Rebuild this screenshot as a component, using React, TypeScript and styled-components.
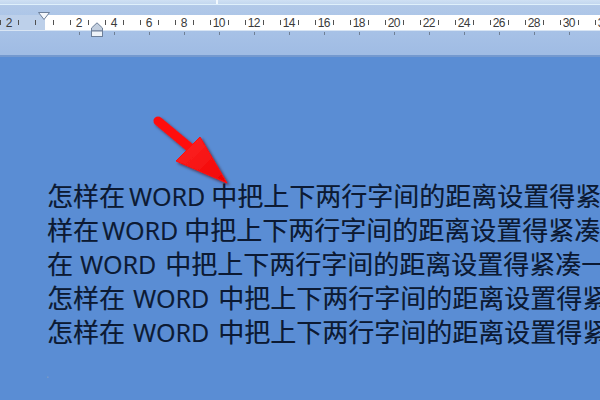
import styled, { createGlobalStyle } from "styled-components";

const GlobalStyle = createGlobalStyle`
  html, body {
    margin: 0;
    padding: 0;
  }
  body {
    width: 600px;
    height: 400px;
    overflow: hidden;
    font-family: "Open Sans", "Noto Sans CJK SC", sans-serif;
  }
`;

const UNIT = 17.5;
const FIRST_UNIT = -2;
const LAST_UNIT = 32;

const units: number[] = [];
for (let i = FIRST_UNIT; i <= LAST_UNIT; i++) units.push(i);

type Line = { before: string; after: string; left: number; right: number };

const lines: Line[] = [
  { before: "怎样在", after: "中把上下两行字间的距离设置得紧", left: 4, right: 6 },
  { before: "样在", after: "中把上下两行字间的距离设置得紧凑", left: 3, right: 6 },
  { before: "在", after: "中把上下两行字间的距离设置得紧凑一", left: 7, right: 9 },
  { before: "怎样在", after: "中把上下两行字间的距离设置得紧", left: 8, right: 9 },
  { before: "怎样在", after: "中把上下两行字间的距离设置得紧", left: 8, right: 9 },
];

const App = () => {
  return (
    <StyledWindow>
      <GlobalStyle />

      <StyledTopStrip>
        <StyledPane $width={216} />
        <StyledPaneDivider />
        <StyledPane />
      </StyledTopStrip>

      <StyledRulerBand>
        <StyledRuler>
          {units.map((u) => (
            <StyledCell key={u} $tab={u > 0 && u % 2 === 0}>
              {u !== 0 && u % 2 === 0 ? Math.abs(u) : ""}
            </StyledCell>
          ))}

          <StyledFirstIndent viewBox="0 0 12 8">
            <path d="M0.5 0.5 H11.5 L6 7.5 Z" fill="#f4f7fb" stroke="#6d7f99" strokeWidth="1" />
          </StyledFirstIndent>

          <StyledHangIndent viewBox="0 0 12 15">
            <path d="M0.5 6 L6 0.8 L11.5 6 V9 H0.5 Z" fill="#c3cfdf" stroke="#6d7f99" strokeWidth="1" />
            <rect x="0.5" y="9" width="11" height="5.5" fill="#eef3f9" stroke="#6d7f99" strokeWidth="1" />
          </StyledHangIndent>
        </StyledRuler>
      </StyledRulerBand>

      <StyledDocument>
        <StyledArrow viewBox="0 0 100 90">
          <defs>
            <linearGradient id="arrowFill" x1="0" y1="0" x2="1" y2="1">
              <stop offset="0" stopColor="#ff2a2a" />
              <stop offset="1" stopColor="#f00000" />
            </linearGradient>
            <filter id="arrowShade" x="-20%" y="-20%" width="150%" height="150%">
              <feDropShadow dx="2" dy="2" stdDeviation="1.8" floodColor="#4a0000" floodOpacity="0.6" />
            </filter>
          </defs>
          <g filter="url(#arrowShade)" fill="url(#arrowFill)" stroke="#ff1010">
            <line x1="13" y1="11" x2="49" y2="41" strokeWidth="9" strokeLinecap="round" />
            <path d="M31 51 L55 27 L82 73 Z" strokeWidth="1" strokeLinejoin="round" />
          </g>
        </StyledArrow>

        <StyledText>
          {lines.map((line, i) => (
            <StyledLine key={i}>
              {line.before}
              <StyledLatin $left={line.left} $right={line.right}>
                WORD
              </StyledLatin>
              {line.after}
            </StyledLine>
          ))}
        </StyledText>

        <StyledMark>·</StyledMark>
      </StyledDocument>
    </StyledWindow>
  );
};

const StyledWindow = styled.div`
  width: 600px;
  height: 400px;
  overflow: hidden;

  display: flex;
  flex-direction: column;

  background: #5a8dd4;
`;

const StyledTopStrip = styled.div`
  height: 4px;
  display: flex;
  border-bottom: 1px solid #dff0fb;
  background: #c9dcf1;
`;

const StyledPane = styled.div<{ $width?: number }>`
  ${(p) => (p.$width ? `width: ${p.$width}px;` : "flex: 1;")}
  background: linear-gradient(#cfe0f3, #c3d7ef);
`;

const StyledPaneDivider = styled.div`
  width: 2px;
  background: #f2f8fd;
`;

const StyledRulerBand = styled.div`
  height: 52px;
  padding-top: 10px;
  box-sizing: border-box;

  background: linear-gradient(#b2c9e8, #a9c3e7 40%, #a0bce4 95%);
  border-bottom: 2px solid #7499cf;
`;

const StyledRuler = styled.div`
  position: relative;
  height: 15px;

  display: flex;

  background: linear-gradient(to right, #bdd0ea 45px, #ffffff 45px);
  border-bottom: 1px solid #d8e5f4;
`;

const StyledCell = styled.div<{ $tab: boolean }>`
  position: relative;
  flex: 0 0 ${UNIT}px;

  display: flex;
  align-items: center;
  justify-content: center;

  font-family: "Liberation Sans", Arial, sans-serif;
  font-size: 12px;
  letter-spacing: -0.6px;
  color: #3a3a3a;

  &::before {
    content: "";
    position: absolute;
    left: 0;
    top: 5px;
    width: 1px;
    height: 5px;
    background: #505050;
  }

  &::after {
    content: "";
    display: ${(p) => (p.$tab ? "block" : "none")};
    position: absolute;
    left: 50%;
    bottom: -5px;
    width: 1px;
    height: 3px;
    background: #6f7f95;
  }
`;

const StyledFirstIndent = styled.svg`
  position: absolute;
  left: 38px;
  top: -3px;
  width: 12px;
  height: 8px;
`;

const StyledHangIndent = styled.svg`
  position: absolute;
  left: 91px;
  top: 7px;
  width: 12px;
  height: 15px;
`;

const StyledDocument = styled.div`
  position: relative;
  flex: 1;
  padding: 121px 0 0 47px;
`;

const StyledText = styled.div`
  display: flex;
  flex-direction: column;
`;

const StyledLine = styled.div`
  height: 34px;
  line-height: 34px;
  white-space: nowrap;

  font-family: "Noto Sans CJK SC", sans-serif;
  font-size: 26px;
  color: #0c1a33;
  text-shadow: 0.4px 0.4px 0.6px rgba(10, 20, 40, 0.4);
`;

const StyledLatin = styled.span<{ $left: number; $right: number }>`
  margin: 0 ${(p) => p.$right}px 0 ${(p) => p.$left}px;
  font-family: "Open Sans", sans-serif;
  font-size: 25px;
`;

const StyledArrow = styled.svg`
  position: absolute;
  left: 145px;
  top: 53px;
  width: 100px;
  height: 90px;
  z-index: 1;
`;

const StyledMark = styled.span`
  position: absolute;
  left: 46px;
  top: 312px;
  font-size: 12px;
  color: #7f9cc4;
`;

export default App;
